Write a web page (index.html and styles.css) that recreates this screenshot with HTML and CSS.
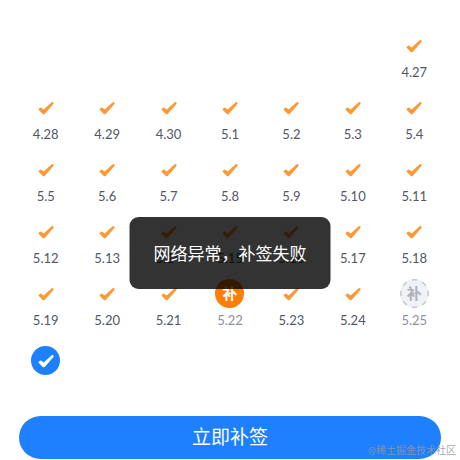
FILE: index.html
```html
<!DOCTYPE html>
<html lang="zh-CN">
<head>
<meta charset="utf-8">
<meta name="viewport" content="width=device-width, initial-scale=1">
<title>签到日历</title>
<link rel="stylesheet" href="styles.css">
</head>
<body>
<svg class="defs" aria-hidden="true">
  <symbol id="tick" viewBox="0 0 16 14">
    <path d="M.4 8.6Q2 6.1 3.3 6.7L5.7 8.5L13.4 1.4Q15 .5 15.6 1.8Q15.9 2.6 15 3.5L6.9 12.7Q5.7 13.9 4.5 12.8Z" fill="currentColor"/>
  </symbol>
</svg>
<main class="page">
  <div class="calendar" id="calendar"></div>
  <button class="submit" type="button">立即补签</button>
</main>
<div class="toast" role="alert">网络异常，补签失败</div>
<div class="watermark">@稀土掘金技术社区</div>
<script src="calendar.js"></script>
</body>
</html>
```
FILE: styles.css
```css
* {
  box-sizing: border-box;
}

body {
  margin: 0;
  background: #fff;
  color: #515767;
  font-family: Lato, "Noto Sans CJK SC", sans-serif;
}

.defs {
  position: absolute;
  width: 0;
  height: 0;
}

.page {
  padding: 31px 15px 0;
}

.calendar {
  display: grid;
  grid-template-columns: repeat(7, 1fr);
  row-gap: 9px;
}

.day {
  display: flex;
  flex-direction: column;
  align-items: center;
}

.day:first-child {
  grid-column-start: 7;
}

.mark {
  position: relative;
  display: flex;
  align-items: center;
  justify-content: center;
  width: 29px;
  height: 29px;
  border-radius: 50%;
  color: #fb9a35;
  font-size: 15px;
  font-weight: 700;
  line-height: 29px;
}

.tick {
  width: 16px;
  height: 14px;
}

.date {
  font-size: 13px;
  line-height: 24px;
}

.makeup .mark {
  background: #ff7d00;
  color: #fff;
}

.missed .mark {
  background: #eff2f7;
  color: #aab0bd;
}

.ring {
  position: absolute;
  inset: 0;
  width: 100%;
  height: 100%;
}

.makeup .date,
.missed .date {
  color: #8a919f;
}

.today {
  padding-top: 5px;
}

.today .mark {
  background: #1e80ff;
  color: #fff;
}

.submit {
  display: block;
  width: calc(100% - 8px);
  margin: 41px auto 0;
  padding: 0 0 3px;
  border: 0;
  border-radius: 22px;
  background: #1e80ff;
  color: #fff;
  font-family: "Noto Sans CJK SC", sans-serif;
  font-size: 19px;
  line-height: 40px;
}

.toast {
  position: absolute;
  top: 217px;
  left: 50%;
  transform: translateX(-50%);
  padding: 23px 24px 21px;
  border-radius: 9px;
  background: rgba(0, 0, 0, 0.8);
  color: #fff;
  font-size: 17px;
  line-height: 28px;
  white-space: nowrap;
}

.watermark {
  position: absolute;
  top: 442px;
  right: 4px;
  color: rgba(145, 150, 160, 0.85);
  font-size: 10px;
  line-height: 16px;
}
```
FILE: calendar.js
```js
const days = [
  '4.27',
  '4.28', '4.29', '4.30', '5.1', '5.2', '5.3', '5.4',
  '5.5', '5.6', '5.7', '5.8', '5.9', '5.10', '5.11',
  '5.12', '5.13', '5.14', '5.15', '5.16', '5.17', '5.18',
  '5.19', '5.20', '5.21', '5.22', '5.23', '5.24', '5.25',
  ''
];
const states = { '5.22': 'makeup', '5.25': 'missed', '': 'today' };
const tick = '<svg class="tick" aria-hidden="true"><use href="#tick"/></svg>';
const ring = '<svg class="ring" viewBox="0 0 29 29" aria-hidden="true"><circle cx="14.5" cy="14.5" r="13.7" fill="none" stroke="#c4c9d3" stroke-width="1.5" pathLength="80" stroke-dasharray="5 5" stroke-dashoffset="2.5"/></svg>';
const marks = { signed: tick, today: tick, makeup: '补', missed: '补' + ring };

document.getElementById('calendar').innerHTML = days.map((date) => {
  const state = states[date] || 'signed';
  const label = date ? `<span class="date">${date}</span>` : '';
  return `<div class="day ${state}"><span class="mark">${marks[state]}</span>${label}</div>`;
}).join('');
```
